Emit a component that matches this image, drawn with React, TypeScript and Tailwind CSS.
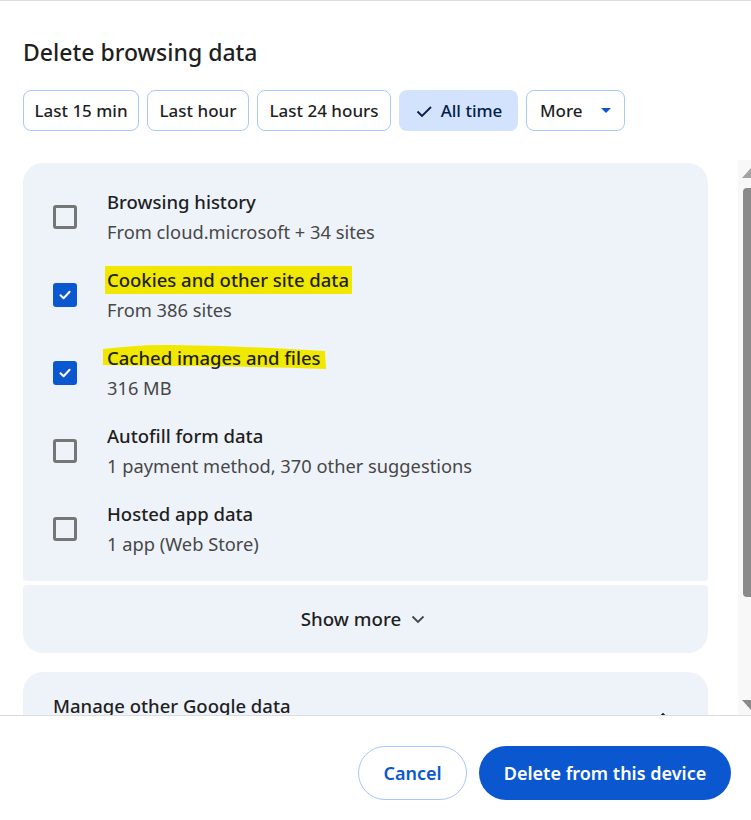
import React from "react";

const font = { fontFamily: '"Noto Sans", "Open Sans", sans-serif' };

function Checkbox({ checked }: { checked: boolean }) {
  if (checked) {
    return (
      <div className="w-[24px] h-[24px] rounded-[3px] bg-[#0b57d0] flex items-center justify-center shrink-0">
        <svg width="16" height="16" viewBox="0 0 16 16">
          <path d="M3.5 8.3 L6.6 11.2 L12.6 4.8" fill="none" stroke="#fff" strokeWidth="2" strokeLinecap="round" strokeLinejoin="round" />
        </svg>
      </div>
    );
  }
  return <div className="w-[24px] h-[24px] rounded-[3px] border-[3px] border-[#747775] shrink-0" />;
}

function Highlight({ children, wavy }: { children: React.ReactNode; wavy?: boolean }) {
  return (
    <span className="relative inline-block">
      {wavy ? (
        <svg className="absolute left-[-5px] top-[0px]" width="225" height="27" viewBox="0 0 225 27">
          <path
            d="M1 4 C 20 2, 40 0, 60 0 C 110 0, 170 3, 223 6 L 224 24 C 170 22, 110 21, 60 21 C 40 21, 20 20, 1 20 Z"
            fill="#f1e800"
          />
        </svg>
      ) : (
        <span className="absolute left-[-2px] right-[-3px] top-[-1px] bottom-[-1px] bg-[#f1e800]" />
      )}
      <span className="relative">{children}</span>
    </span>
  );
}

const rows = [
  { title: "Browsing history", sub: "From cloud.microsoft + 34 sites", checked: false, hl: 0 },
  { title: "Cookies and other site data", sub: "From 386 sites", checked: true, hl: 1 },
  { title: "Cached images and files", sub: "316 MB", checked: true, hl: 2 },
  { title: "Autofill form data", sub: "1 payment method, 370 other suggestions", checked: false, hl: 0 },
  { title: "Hosted app data", sub: "1 app (Web Store)", checked: false, hl: 0 },
];

export default function App() {
  return (
    <div className="w-[751px] h-[820px] bg-white flex flex-col overflow-hidden text-[#1f1f1f]" style={font}>
      <div className="h-[1px] bg-[#dadce0] shrink-0" />
      <div className="px-[23px] pt-[36px] shrink-0">
        <div className="text-[23px] leading-[30px] font-medium text-[#1f1f1f]">Delete browsing data</div>
        <div className="flex gap-[8px] mt-[23px] h-[41px]">
          <div className="w-[116px] h-[41px] rounded-[8px] border border-[#a8c7fa] flex items-center justify-center text-[17px] font-medium">Last 15 min</div>
          <div className="w-[102px] h-[41px] rounded-[8px] border border-[#a8c7fa] flex items-center justify-center text-[17px] font-medium">Last hour</div>
          <div className="w-[134px] h-[41px] rounded-[8px] border border-[#a8c7fa] flex items-center justify-center text-[17px] font-medium">Last 24 hours</div>
          <div className="w-[119px] h-[41px] rounded-[8px] bg-[#d3e3fd] flex items-center justify-center gap-[8px] text-[17px] font-medium text-[#041e49]">
            <svg width="18" height="18" viewBox="0 0 18 18">
              <path d="M2.5 9.5 L7 14 L16 5" fill="none" stroke="#041e49" strokeWidth="1.8" />
            </svg>
            <span>All time</span>
          </div>
          <div className="w-[99px] h-[41px] rounded-[8px] border border-[#a8c7fa] flex items-center pl-[13px] gap-[18px] text-[17px] font-medium">
            <span>More</span>
            <svg width="10" height="6" viewBox="0 0 10 6">
              <path d="M0 0 L10 0 L5 5 Z" fill="#0b57d0" />
            </svg>
          </div>
        </div>
      </div>
      <div className="flex flex-1 min-h-0 mt-[29px]">
        <div className="flex-1 min-w-0 overflow-hidden pl-[23px] pr-[30px] pt-[3px]">
          <div className="bg-[#eef3fa] rounded-t-[20px] rounded-b-[4px] pt-[15px] pb-[13px] px-[30px]">
            {rows.map((r) => (
              <div key={r.title} className="flex items-center h-[78px] gap-[30px]">
                <Checkbox checked={r.checked} />
                <div className="flex flex-col">
                  <div className="text-[18.5px] leading-[26px] font-medium text-[#1f1f1f]">
                    {r.hl === 1 ? <Highlight>{r.title}</Highlight> : r.hl === 2 ? <Highlight wavy>{r.title}</Highlight> : r.title}
                  </div>
                  <div className="text-[18.3px] leading-[26px] text-[#474747] mt-[4px]">{r.sub}</div>
                </div>
              </div>
            ))}
          </div>
          <div className="mt-[4px] h-[68px] bg-[#eef3fa] rounded-t-[4px] rounded-b-[20px] flex items-center justify-center gap-[9px] pr-[4px]">
            <span className="text-[18.7px] font-medium text-[#1f1f1f]">Show more</span>
            <svg width="16" height="16" viewBox="0 0 16 16">
              <path d="M2.5 5.5 L8 11 L13.5 5.5" fill="none" stroke="#444746" strokeWidth="1.8" />
            </svg>
          </div>
          <div className="mt-[19px] h-[80px] bg-[#eef3fa] rounded-t-[20px] pt-[20px] px-[30px] flex justify-between">
            <span className="text-[18.5px] leading-[28px] font-medium text-[#1f1f1f]">Manage other Google data</span>
            <svg className="mt-[18px] mr-[8px]" width="14" height="14" viewBox="0 0 14 14">
              <path d="M2 9 L7 4 L12 9" fill="none" stroke="#1f1f1f" strokeWidth="1.8" />
            </svg>
          </div>
        </div>
        <div className="w-[13px] shrink-0 bg-[#f8f8f8] flex flex-col items-end pt-[8px] pb-[5px]">
          <svg width="9" height="10" viewBox="0 0 9 10" className="ml-auto">
            <path d="M0 10 L9 0 L9 10 Z" fill="#a3a3a3" />
          </svg>
          <div className="w-[8px] h-[409px] mt-[10px] bg-[#8a8a8a] rounded-l-[4px]" />
          <div className="flex-1" />
          <svg width="9" height="10" viewBox="0 0 9 10">
            <path d="M0 0 L9 0 L9 10 Z" fill="#8a8a8a" />
          </svg>
        </div>
      </div>
      <div className="h-[105px] shrink-0 border-t border-[#dadce0] flex items-start justify-end gap-[12px] pt-[30px] pr-[20px]">
        <div className="w-[109px] h-[54px] rounded-full border border-[#a8c7fa] flex items-center justify-center text-[18px] font-semibold text-[#0b57d0]">Cancel</div>
        <div className="w-[252px] h-[54px] rounded-full bg-[#0b57d0] flex items-center justify-center text-[18px] font-semibold text-white">Delete from this device</div>
      </div>
    </div>
  );
}
